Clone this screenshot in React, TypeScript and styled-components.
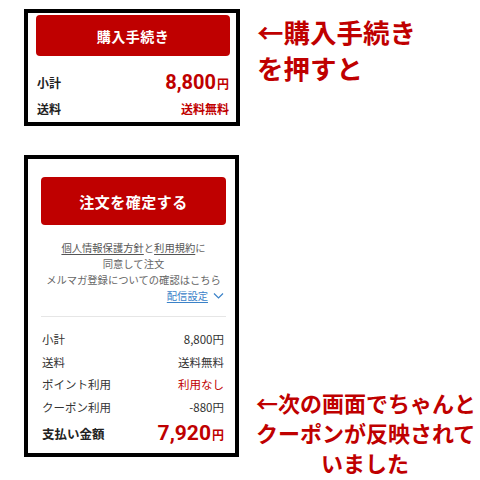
import React, { FC } from "react";
import styled, { createGlobalStyle } from "styled-components";

const RED = "#bf0000";

const GlobalStyle = createGlobalStyle`
  html, body {
    margin: 0;
    padding: 0;
    background: #fff;
  }
  body {
    font-family: "Noto Sans CJK JP", "Noto Sans", sans-serif;
    color: #333;
  }
`;

type Row = { label: string; value: string; tone?: "red" };

const summary: Row[] = [
  { label: "小計", value: "8,800円" },
  { label: "送料", value: "送料無料" },
  { label: "ポイント利用", value: "利用なし", tone: "red" },
  { label: "クーポン利用", value: "-880円" },
];

const ChevronDown: FC = () => (
  <svg width="11" height="8" viewBox="0 0 11 8" fill="none">
    <path d="M1 1.5 L5.5 6 L10 1.5" stroke="#3b82c8" strokeWidth="1.2" />
  </svg>
);

export default function App() {
  return (
    <>
      <GlobalStyle />
      <Page>
        <Section>
          <CartBox>
            <RedButton $height={41} $size={14}>
              購入手続き
            </RedButton>
            <CartRow $height={28} $top={12}>
              <CartLabel>小計</CartLabel>
              <BigPrice $size={20}>
                8,800<Yen>円</Yen>
              </BigPrice>
            </CartRow>
            <CartRow $height={24}>
              <CartLabel>送料</CartLabel>
              <FreeShip>送料無料</FreeShip>
            </CartRow>
          </CartBox>
          <Annotation $size={26.5} $lineHeight={36} $top={5} $align="left">
            ←購入手続き
            <br />
            を押すと
          </Annotation>
        </Section>

        <Section $gap={29}>
          <ConfirmBox>
            <RedButton $height={48} $size={15}>
              注文を確定する
            </RedButton>
            <Notes>
              <NoteLine>
                <TermsLink>個人情報保護方針</TermsLink>と
                <TermsLink>利用規約</TermsLink>に
              </NoteLine>
              <NoteLine>同意して注文</NoteLine>
              <NoteLine>メルマガ登録についての確認はこちら</NoteLine>
              <MailLine>
                <MailLink>配信設定</MailLink>
                <ChevronDown />
              </MailLine>
            </Notes>
            <Divider />
            <Summary>
              {summary.map((row) => (
                <SummaryRow key={row.label}>
                  <span>{row.label}</span>
                  <SummaryValue $tone={row.tone}>{row.value}</SummaryValue>
                </SummaryRow>
              ))}
              <TotalRow>
                <TotalLabel>支払い金額</TotalLabel>
                <BigPrice $size={21}>
                  7,920<Yen>円</Yen>
                </BigPrice>
              </TotalRow>
            </Summary>
          </ConfirmBox>
          <Annotation $size={22} $lineHeight={30} $top={232} $align="center">
            ←次の画面でちゃんと
            <br />
            クーポンが反映されて
            <br />
            いました
          </Annotation>
        </Section>
      </Page>
    </>
  );
}

const Page = styled.div`
  width: 480px;
  height: 480px;
  padding: 9px 0 0 24px;
  box-sizing: border-box;
  display: flex;
  flex-direction: column;
  overflow: hidden;
`;

const Section = styled.div<{ $gap?: number }>`
  display: flex;
  align-items: flex-start;
  margin-top: ${(p) => p.$gap ?? 0}px;
`;

const CartBox = styled.div`
  width: 216px;
  height: 117px;
  box-sizing: border-box;
  border: 4px solid #000;
  padding: 2px 6px 0 8px;
  display: flex;
  flex-direction: column;
`;

const RedButton = styled.div<{ $height: number; $size: number }>`
  height: ${(p) => p.$height}px;
  flex-shrink: 0;
  background: ${RED};
  border-radius: 4px;
  color: #fff;
  font-weight: 700;
  font-size: ${(p) => p.$size}px;
  display: flex;
  align-items: center;
  justify-content: center;
  letter-spacing: 0.5px;
`;

const CartRow = styled.div<{ $height: number; $top?: number }>`
  height: ${(p) => p.$height}px;
  margin-top: ${(p) => p.$top ?? 0}px;
  display: flex;
  align-items: center;
  justify-content: space-between;
  padding-right: 1px;
`;

const CartLabel = styled.span`
  font-size: 12px;
  font-weight: 700;
  color: #222;
  padding-left: 1px;
`;

const BigPrice = styled.span<{ $size: number }>`
  color: ${RED};
  font-weight: 700;
  font-size: ${(p) => p.$size}px;
  line-height: 1;
  font-family: "Roboto", "Noto Sans CJK JP", sans-serif;
`;

const Yen = styled.span`
  font-size: 12px;
  font-family: "Noto Sans CJK JP", sans-serif;
  margin-left: 1px;
`;

const FreeShip = styled.span`
  color: ${RED};
  font-weight: 700;
  font-size: 12px;
`;

const Annotation = styled.div<{
  $size: number;
  $lineHeight: number;
  $top: number;
  $align: "left" | "center";
}>`
  margin-left: 17px;
  margin-top: ${(p) => p.$top}px;
  width: 218px;
  color: ${RED};
  font-weight: 700;
  font-size: ${(p) => p.$size}px;
  line-height: ${(p) => p.$lineHeight}px;
  text-align: ${(p) => p.$align};
  white-space: nowrap;
`;

const ConfirmBox = styled.div`
  width: 215px;
  height: 302px;
  box-sizing: border-box;
  border: 4px solid #000;
  padding: 18px 9px 0 13px;
  display: flex;
  flex-direction: column;
`;

const Notes = styled.div`
  margin-top: 15px;
  font-size: 10.3px;
  line-height: 16px;
  color: #666;
  text-align: center;
`;

const NoteLine = styled.div``;

const TermsLink = styled.span`
  color: #555;
  text-decoration: underline;
  text-underline-offset: 2px;
`;

const MailLine = styled.div`
  display: flex;
  justify-content: flex-end;
  align-items: center;
  gap: 5px;
  padding-right: 2px;
`;

const MailLink = styled.span`
  color: #3b82c8;
  text-decoration: underline;
  text-underline-offset: 2px;
`;

const Divider = styled.div`
  margin-top: 12px;
  height: 1px;
  background: #e6e6e6;
`;

const Summary = styled.div`
  padding: 11px 2px 0 1px;
  display: flex;
  flex-direction: column;
`;

const SummaryRow = styled.div`
  height: 22.5px;
  display: flex;
  align-items: center;
  justify-content: space-between;
  font-size: 11.5px;
  color: #333;
`;

const SummaryValue = styled.span<{ $tone?: "red" }>`
  color: ${(p) => (p.$tone === "red" ? RED : "#333")};
`;

const TotalRow = styled.div`
  height: 30px;
  display: flex;
  align-items: center;
  justify-content: space-between;
`;

const TotalLabel = styled.span`
  font-size: 12.5px;
  font-weight: 700;
  color: #222;
`;
